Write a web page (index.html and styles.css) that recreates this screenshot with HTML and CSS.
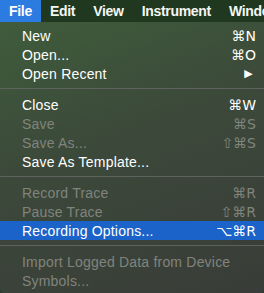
FILE: index.html
```html
<!DOCTYPE html>
<html lang="en">
  <head>
    <meta charset="UTF-8" />
    <title>File Menu</title>
    <link rel="stylesheet" href="styles.css">
  </head>
  <body>
    <div class="menubar">
      <span class="bar-item active">File</span>
      <span class="bar-item">Edit</span>
      <span class="bar-item">View</span>
      <span class="bar-item">Instrument</span>
      <span class="bar-item">Window</span>
    </div>
    <div class="menu">
      <div class="item"><span>New</span><span class="key">⌘N</span></div>
      <div class="item"><span>Open...</span><span class="key">⌘O</span></div>
      <div class="item"><span>Open Recent</span><span class="arrow">▶</span></div>
      <div class="sep"></div>
      <div class="item"><span>Close</span><span class="key">⌘W</span></div>
      <div class="item disabled"><span>Save</span><span class="key">⌘S</span></div>
      <div class="item disabled"><span>Save As...</span><span class="key">⇧⌘S</span></div>
      <div class="item"><span>Save As Template...</span></div>
      <div class="sep"></div>
      <div class="item disabled"><span>Record Trace</span><span class="key">⌘R</span></div>
      <div class="item disabled"><span>Pause Trace</span><span class="key">⇧⌘R</span></div>
      <div class="item selected"><span>Recording Options...</span><span class="key">⌥⌘R</span></div>
      <div class="sep"></div>
      <div class="item disabled"><span>Import Logged Data from Device</span></div>
      <div class="item disabled"><span>Symbols...</span></div>
    </div>
  </body>
</html>
```

FILE: styles.css
```css
/* Page */
body {
  margin: 0;
  width: 264px;
  height: 293px;
  overflow: hidden;
  background: #2b3a2b;
  font-family: "Liberation Sans", Arial, "DejaVu Sans", sans-serif;
  color: #ffffff;
}

/* Menu bar */
.menubar {
  display: flex;
  height: 22px;
  background: #1f381f;
  white-space: nowrap;
}

.bar-item {
  padding: 0 9px;
  line-height: 22px;
  font-size: 14px;
  font-weight: bold;
  letter-spacing: -0.3px;
  color: #f4f6f2;
}

.bar-item.active {
  background: #2b7be0;
  color: #ffffff;
}

/* Drop-down menu */
.menu {
  padding: 4px 0;
  border-radius: 0 0 6px 6px;
  background: linear-gradient(160deg, #3f5c3b 0%, #3c4a3a 40%, #393c38 100%);
}

.item {
  display: flex;
  justify-content: space-between;
  align-items: center;
  height: 19px;
  padding: 0 8px 0 22px;
  font-size: 14px;
  letter-spacing: 0.2px;
  color: #ffffff;
}

.item.disabled {
  color: #80847e;
}

.item.selected {
  background: #1b63c8;
}

.key {
  font-family: "DejaVu Sans", sans-serif;
  font-size: 14px;
  letter-spacing: 0;
}

.arrow {
  font-family: "DejaVu Sans", sans-serif;
  font-size: 11px;
  margin-right: 3px;
}

.sep {
  height: 1px;
  margin: 5px 0 6px;
  background: #5f635d;
}
```
